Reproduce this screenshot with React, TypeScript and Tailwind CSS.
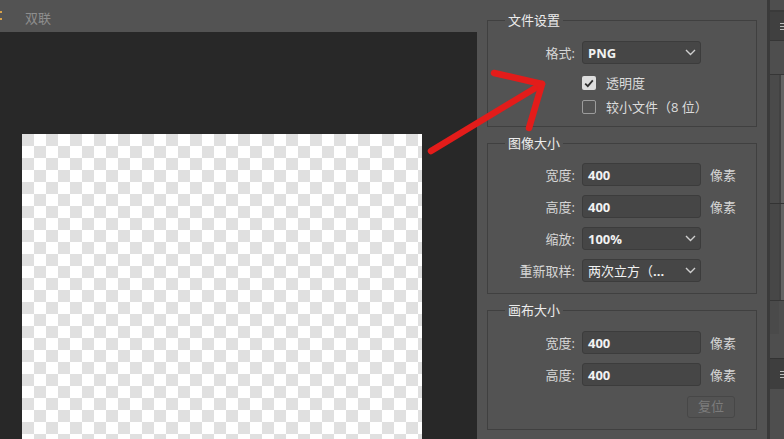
import React from 'react';

const font = 'font-["Open_Sans","Noto_Sans_CJK_SC",sans-serif]';

function Chevron() {
  return (
    <svg width="11" height="7" viewBox="0 0 11 7" className="shrink-0">
      <polyline points="1,1 5.5,5.5 10,1" fill="none" stroke="#cfcfcf" strokeWidth="1.4" />
    </svg>
  );
}

function Field({ label, value, select, unit }: { label: string; value: React.ReactNode; select?: boolean; unit?: string }) {
  return (
    <div className="flex items-center h-[23px]">
      <div className="w-[87px] text-right text-[13px] leading-[16px] text-[#d6d6d6]">{label}</div>
      <div className="ml-[7px] w-[119px] h-[23px] rounded-[3px] border border-[#3c3c3c] bg-[#464646] flex items-center justify-between pl-[5px] pr-[4px]">
        <span className="text-[13px] leading-[16px] font-bold text-[#f2f2f2] whitespace-nowrap">{value}</span>
        {select && <Chevron />}
      </div>
      {unit && <div className="ml-[9px] text-[13px] leading-[16px] text-[#d6d6d6]">{unit}</div>}
    </div>
  );
}

function Check({ checked, label }: { checked?: boolean; label: string }) {
  return (
    <div className="flex items-center h-[24px] pl-[94px]">
      {checked ? (
        <div className="w-[14px] h-[14px] rounded-[2px] bg-[#dedede] flex items-center justify-center">
          <svg width="10" height="9" viewBox="0 0 10 9">
            <polyline points="1.2,4.6 3.8,7.2 8.8,1.4" fill="none" stroke="#2e2e2e" strokeWidth="1.8" />
          </svg>
        </div>
      ) : (
        <div className="w-[14px] h-[14px] rounded-[2px] border border-[#9c9c9c]" />
      )}
      <span className="ml-[10px] text-[13px] leading-[16px] text-[#dcdcdc]">{label}</span>
    </div>
  );
}

function Group({ title, children, pt, pb }: { title: string; children: React.ReactNode; pt: string; pb: string }) {
  return (
    <fieldset className="border border-[#404040] min-w-0">
      <legend className="ml-[17px] px-[3px] text-[13px] leading-[17px] text-[#ececec]">{title}</legend>
      <div className={`${pt} ${pb} flex flex-col`}>{children}</div>
    </fieldset>
  );
}

function Burger() {
  return (
    <div className="flex flex-col gap-[2px] items-end">
      <div className="w-[4px] h-[1px] bg-[#bdbdbd]" />
      <div className="w-[4px] h-[1px] bg-[#bdbdbd]" />
      <div className="w-[4px] h-[1px] bg-[#bdbdbd]" />
    </div>
  );
}

export default function App() {
  return (
    <div className={`relative w-[784px] h-[439px] overflow-hidden bg-[#535353] flex ${font}`}>
      {/* document area */}
      <div className="w-[477px] h-[439px] flex flex-col shrink-0 overflow-hidden">
        <div className="h-[32px] shrink-0 flex items-start">
          <div className="w-[2px] pt-[11px] flex flex-col gap-[5px]">
            <div className="h-[2px] bg-[#d9a24a]" />
            <div className="h-[2px] bg-[#d9a24a]" />
          </div>
          <span className="ml-[23px] mt-[10px] text-[13px] leading-[16px] text-[#8e8e8e]">双联</span>
        </div>
        <div className="flex-1 min-h-0 bg-[#282828] pl-[22px] pt-[102px]">
          <div className="w-[400px] h-[400px] bg-[conic-gradient(#ffffff_25%,#e0e0e0_0_50%,#ffffff_0_75%,#e0e0e0_0)] bg-[length:24px_24px]" />
        </div>
      </div>

      {/* export settings panel */}
      <div className="w-[290px] shrink-0 px-[10px] pt-[12px] flex flex-col gap-[8px]">
        <Group title="文件设置" pt="pt-[12px]" pb="pb-[7px]">
          <Field label="格式:" value="PNG" select />
          <div className="mt-[7px]">
            <Check checked label="透明度" />
            <Check label="较小文件（8 位）" />
          </div>
        </Group>
        <Group title="图像大小" pt="pt-[11px]" pb="pb-[11px]">
          <div className="flex flex-col gap-[9px]">
            <Field label="宽度:" value="400" unit="像素" />
            <Field label="高度:" value="400" unit="像素" />
            <Field label="缩放:" value="100%" select />
            <Field
              label="重新取样:"
              value={
                <>
                  <span className="font-normal">两次立方（</span>...
                </>
              }
              select
            />
          </div>
        </Group>
        <Group title="画布大小" pt="pt-[12px]" pb="pb-[11px]">
          <div className="flex flex-col gap-[9px]">
            <Field label="宽度:" value="400" unit="像素" />
            <Field label="高度:" value="400" unit="像素" />
          </div>
          <div className="mt-[10px] pl-[199px]">
            <div className="w-[48px] h-[22px] rounded-[3px] border border-[#474747] flex items-center justify-center text-[13px] text-[#7c7c7c]">
              复位
            </div>
          </div>
        </Group>
      </div>

      {/* right dock strip */}
      <div className="flex-1 border-l-[3px] border-[#3a3a3a] flex flex-col">
        <div className="h-[10px] bg-[#4e4e4e]" />
        <div className="h-[2px] bg-[#3a3a3a]" />
        <div className="h-[28px] bg-[#404040] flex items-center justify-end">
          <Burger />
        </div>
        <div className="h-[1px] bg-[#363636]" />
        <div className="h-[33px] bg-[#4e4e4e]" />
        <div className="h-[1px] bg-[#363636]" />
        <div className="h-[128px] flex">
          <div className="flex-1 bg-[#4a4a4a]" />
          <div className="w-[2px] bg-[#424242]" />
          <div className="w-[3px] bg-[#646464]" />
        </div>
        <div className="h-[1px] bg-[#333333]" />
        <div className="h-[96px] flex">
          <div className="flex-1 bg-[#474747]" />
          <div className="w-[2px] bg-[#424242]" />
          <div className="w-[3px] bg-[#646464]" />
        </div>
        <div className="h-[1px] bg-[#363636]" />
        <div className="h-[33px] flex">
          <div className="flex-1 bg-[#4a4a4a]" />
          <div className="w-[5px] bg-[#4e4e4e]" />
        </div>
        <div className="h-[24px] bg-[#4e4e4e]" />
        <div className="h-[1px] bg-[#333333]" />
        <div className="h-[30px] bg-[#3e3e3e] flex items-center justify-end">
          <Burger />
        </div>
        <div className="flex-1 bg-[#4e4e4e]" />
      </div>

      {/* red annotation arrow */}
      <svg className="absolute left-0 top-0 pointer-events-none" width="784" height="439" viewBox="0 0 784 439">
        <g fill="none" stroke="#e31c1a" strokeWidth="6.5" strokeLinecap="round" strokeLinejoin="round">
          <line x1="431" y1="151" x2="542" y2="84" />
          <polyline points="494,73 542,84 529,128" />
        </g>
      </svg>
    </div>
  );
}
